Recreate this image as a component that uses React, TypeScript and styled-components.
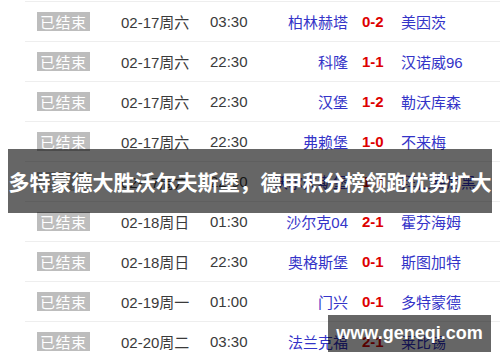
import React from "react";
import styled, { createGlobalStyle } from "styled-components";

const Global = createGlobalStyle`
  html, body { margin: 0; padding: 0; background: #fff; }
  body {
    width: 500px; height: 362px; overflow: hidden; position: relative;
    font-family: "Liberation Sans", "Noto Sans CJK SC", sans-serif;
  }
`;

const Page = styled.div`
  position: relative;
  width: 500px;
  height: 362px;
  overflow: hidden;
`;

const Table = styled.div`
  padding: 1px 0 0 25px;
  display: flex;
  flex-direction: column;
`;

const Row = styled.div`
  display: grid;
  grid-template-columns: 96px 89px 50px 88px 53px 1fr;
  align-items: center;
  height: 39px;
  border-top: 1px solid #eeeeee;
  font-size: 15px;
  white-space: nowrap;
`;

const Status = styled.span`
  justify-self: start;
  margin-left: 12px;
  background: #bdbdbd;
  color: #fff;
  font-family: "Noto Sans CJK SC", sans-serif;
  font-size: 15px;
  line-height: 19px;
  height: 19px;
  padding: 0 3px;
  letter-spacing: 0.5px;
`;

const Plain = styled.span`
  color: #3a3a3a;
`;

const Team = styled.span<{ $home?: boolean }>`
  color: #3434c8;
  text-align: ${(p) => (p.$home ? "right" : "left")};
`;

const Score = styled.span`
  color: #dd0000;
  font-weight: bold;
  padding-left: 14px;
`;

const Banner = styled.div`
  position: absolute;
  left: 8px;
  top: 149px;
  width: 484px;
  height: 64px;
  background: rgba(0, 0, 0, 0.6);
  color: #fff;
  font-family: "Noto Sans CJK SC", sans-serif;
  font-weight: bold;
  font-size: 21px;
  display: flex;
  align-items: center;
  justify-content: center;
  white-space: nowrap;
`;

const Watermark = styled.div`
  position: absolute;
  left: 328px;
  top: 315px;
  width: 163px;
  height: 37px;
  background: rgba(0, 0, 0, 0.6);
  color: #fff;
  font-family: "Liberation Sans", sans-serif;
  font-weight: bold;
  font-size: 18px;
  display: flex;
  align-items: center;
  justify-content: center;
`;

const matches = [
  ["02-17周六", "03:30", "柏林赫塔", "0-2", "美因茨"],
  ["02-17周六", "22:30", "科隆", "1-1", "汉诺威96"],
  ["02-17周六", "22:30", "汉堡", "1-2", "勒沃库森"],
  ["02-17周六", "22:30", "弗赖堡", "1-0", "不来梅"],
  ["02-17周六", "22:30", "沃尔夫斯堡", "1-2", "拜仁慕尼黑"],
  ["02-18周日", "01:30", "沙尔克04", "2-1", "霍芬海姆"],
  ["02-18周日", "22:30", "奥格斯堡", "0-1", "斯图加特"],
  ["02-19周一", "01:00", "门兴", "0-1", "多特蒙德"],
  ["02-20周二", "03:30", "法兰克福", "2-1", "莱比锡"],
];

export default function App() {
  return (
    <Page>
      <Global />
      <Table>
        {matches.map(([d, t, h, s, a], i) => (
          <Row key={i}>
            <Status>已结束</Status>
            <Plain>{d}</Plain>
            <Plain>{t}</Plain>
            <Team $home>{h}</Team>
            <Score>{s}</Score>
            <Team>{a}</Team>
          </Row>
        ))}
      </Table>
      <Banner>多特蒙德大胜沃尔夫斯堡，德甲积分榜领跑优势扩大</Banner>
      <Watermark>www.geneqi.com</Watermark>
    </Page>
  );
}
